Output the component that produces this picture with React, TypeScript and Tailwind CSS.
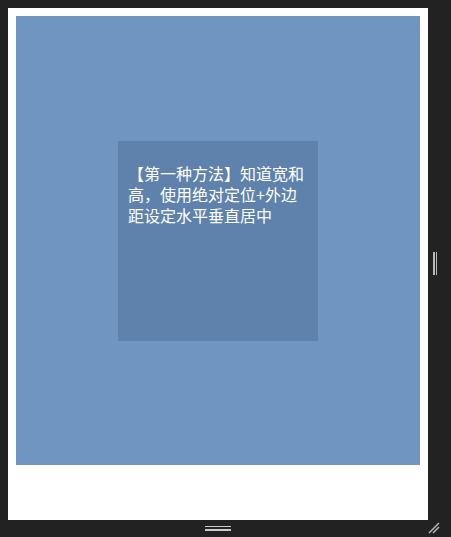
export default function App() {
  return (
    <div className="w-[451px] h-[537px] bg-[#222222] flex flex-col">
      <div className="flex h-[520px]">
        <div className="w-[8px]" />
        <div className="flex flex-col">
          <div className="h-[8px]" />
          <div className="w-[420px] h-[512px] bg-white p-[8px]">
            <div className="w-[404px] h-[449px] bg-[#6f95c0] flex items-center justify-center">
              <div
                className="w-[200px] h-[200px] bg-[#5f82ad] px-[10px] pt-[22px] text-white text-[16px] leading-[21px]"
                style={{ fontFamily: '"Noto Sans CJK SC", "Microsoft YaHei", sans-serif' }}
              >
                【第一种方法】知道宽和高，使用绝对定位+外边距设定水平垂直居中
              </div>
            </div>
          </div>
        </div>
        <div className="flex-1 flex items-center pt-[6px]">
          <div className="flex gap-[1px] h-[23px] ml-[5px]">
            <div className="w-[1.5px] bg-[#b8b8b8]" />
            <div className="w-[1.5px] bg-[#b8b8b8]" />
          </div>
        </div>
      </div>
      <div className="flex-1 flex">
        <div className="w-[428px] flex items-center justify-center">
          <div className="flex flex-col gap-[2px] w-[26px] mt-[-1px] ml-[8px]">
            <div className="h-[1.5px] bg-[#cccccc]" />
            <div className="h-[1.5px] bg-[#cccccc]" />
          </div>
        </div>
        <div className="flex-1 flex items-center">
          <svg width="12" height="12" viewBox="0 0 12 12" className="mt-[-2px]">
            <line x1="1" y1="11" x2="11" y2="1" stroke="#bbbbbb" strokeWidth="1.4" />
            <line x1="5" y1="11" x2="11" y2="5" stroke="#bbbbbb" strokeWidth="1.4" />
          </svg>
        </div>
      </div>
    </div>
  );
}
